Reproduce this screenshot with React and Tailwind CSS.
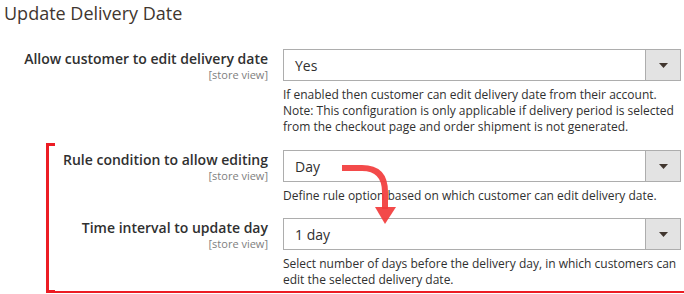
import React from "react";

const font = { fontFamily: '"Open Sans", "Noto Sans", sans-serif' };

function Select({ value }) {
  return (
    <div className="flex h-[32px] w-[398px] border border-[#adadad] bg-white">
      <div className="flex flex-1 items-center pl-[11px] text-[14px] text-[#303030]">{value}</div>
      <div className="flex w-[35px] items-center justify-center border-l border-[#adadad] bg-[#e3e3e3]">
        <svg width="9" height="5" viewBox="0 0 9 5">
          <polygon points="0,0 9,0 4.5,5" fill="#41362f" />
        </svg>
      </div>
    </div>
  );
}

function Row({ label, labelW, value, desc, className = "" }) {
  return (
    <div className={"flex " + className}>
      <div className="flex flex-col items-end pr-[15px]" style={{ width: labelW }}>
        <div className="whitespace-nowrap text-[14px] font-semibold leading-[19px] text-[#303030]">{label}</div>
        <div className="text-[11px] leading-[14px] text-[#808080]">[store view]</div>
      </div>
      <div className="flex flex-col">
        <Select value={value} />
        <div className="mt-[6px] w-[398px] text-[12px] leading-[16px] text-[#303030]">
          {desc}
        </div>
      </div>
    </div>
  );
}

export default function App() {
  return (
    <div className="relative h-[294px] w-[684px] overflow-hidden bg-white" style={font}>
      <div className="pl-[4px] pt-[1px] text-[18px] font-medium leading-[24px] text-[#41362f]">
        Update Delivery Date
      </div>
      <Row
        className="mt-[24px]"
        labelW={283}
        label="Allow customer to edit delivery date"
        value="Yes"
        desc={
          <>
            If enabled then customer can edit delivery date from their account.
            <br />
            Note: This configuration is only applicable if delivery period is selected
            <br />
            from the checkout page and order shipment is not generated.
          </>
        }
      />
      <div className="relative ml-[46px] mt-[8px] border-b-2 border-l-[3px] border-[#ec1c24] pb-[3px] pt-[7px]">
        <div className="absolute left-[-3px] top-0 h-[3px] w-[9px] bg-[#ec1c24]" />
        <div className="absolute bottom-[-2px] left-[-3px] h-[3px] w-[9px] bg-[#ec1c24]" />
        <Row
          labelW={234}
          label="Rule condition to allow editing"
          value="Day"
          desc="Define rule option based on which customer can edit delivery date."
        />
        <Row
          className="mt-[14px]"
          labelW={234}
          label="Time interval to update day"
          value="1 day"
          desc={
            <>
              Select number of days before the delivery day, in which customers can
              <br />
              edit the selected delivery date.
            </>
          }
        />
      </div>
      <svg className="absolute left-0 top-0" width="684" height="294" viewBox="0 0 684 294">
        <path
          d="M342 168 H362 Q385 168 385 192 V209"
          fill="none"
          stroke="#f23b3b"
          strokeOpacity="0.92"
          strokeWidth="6"
        />
        <polygon points="375,207 396,207 385,224" fill="#f23b3b" fillOpacity="0.92" />
      </svg>
    </div>
  );
}
